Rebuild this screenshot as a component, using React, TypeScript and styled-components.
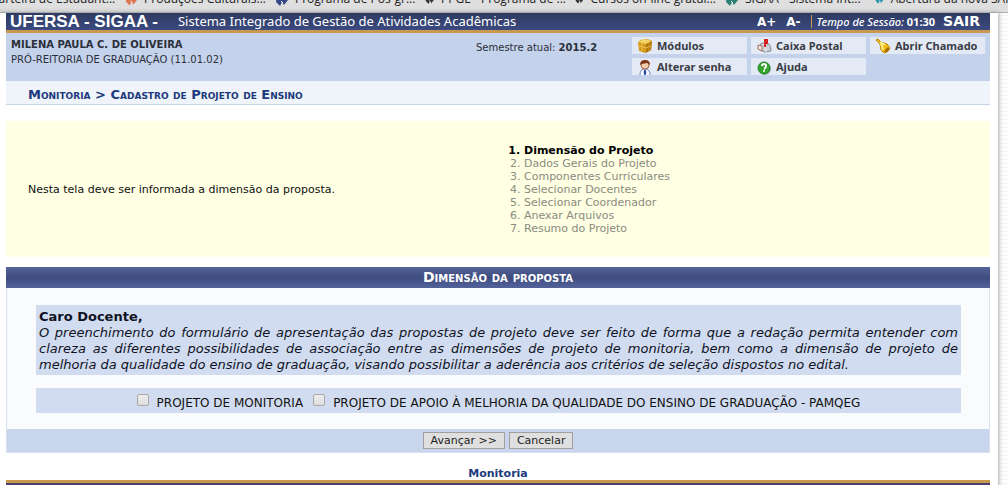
import React from "react";
import styled, { createGlobalStyle } from "styled-components";

const GlobalStyle = createGlobalStyle`
  * { box-sizing: border-box; }
  html { overflow: hidden; }
  body {
    margin: 0;
    color: #111;
    font: 11px/13px "DejaVu Sans", Verdana, sans-serif;
    background: repeating-linear-gradient(#fdfdfd 0 3px, #f3f3f3 3px 4px);
  }
  button, input { font: inherit; }
`;

const BookmarkBar = styled.nav`
  display: flex;
  align-items: flex-end;
  height: 13px;
  padding-bottom: 5px;
  overflow: hidden;
  background: #dfdfdf;
  border-bottom: 1px solid #a9adb5;
`;

const Bookmark = styled.a<{ $first?: boolean }>`
  flex: none;
  display: flex;
  align-items: center;
  gap: 7px;
  width: ${(p) => (p.$first ? "125px" : "150px")};
  margin-left: ${(p) => (p.$first ? "-9px" : "0")};
  padding-left: ${(p) => (p.$first ? "0" : "9px")};
  color: #222;
  font: 12px/16px "Open Sans", sans-serif;
  white-space: nowrap;
  text-decoration: none;
`;

const Page = styled.div`
  margin-right: 10px;
  padding: 0 8px 0 6px;
  background: #fff;
  box-shadow: 0 0 4px 1px #aaa;
`;

const TopBar = styled.header`
  display: flex;
  align-items: center;
  height: 20px;
  padding: 0 10px 0 4px;
  color: #fff;
  background: linear-gradient(#2e3a61, #3b4a80);
  border-bottom: 3px solid #c8984f;
  white-space: nowrap;
`;

const Brand = styled.h1`
  margin: 0 20px 0 0;
  font: bold 17px/17px "Liberation Sans", Arial, sans-serif;
`;

const SystemName = styled.span`
  flex: 1;
  font: 13px/17px "Noto Sans", Tahoma, sans-serif;
`;

const SizeButton = styled.button`
  margin-right: 10px;
  padding: 0;
  border: 0;
  color: #fff;
  background: none;
  font-size: 12px;
  line-height: 16px;
  font-weight: bold;
`;

const Session = styled.span`
  padding: 0 8px 0 5px;
  border-left: 1px solid #c8984f;
  font: bold 11px/13px "Noto Sans", Tahoma, sans-serif;
  em { font-weight: 500; }
`;

const Exit = styled.a`
  color: #fff;
  font-size: 14px;
  font-weight: bold;
  text-decoration: none;
`;

const UserPanel = styled.section`
  display: flex;
  height: 48px;
  padding: 4px 5px;
  color: #2b2f3a;
  background: #c4d2eb;
`;

const UserInfo = styled.div`
  flex: 1;
  font-size: 10px;
  line-height: 15px;
`;

const Semester = styled.div`
  width: 156px;
  padding-top: 4px;
  font-size: 10px;
`;

const Tools = styled.div`
  display: grid;
  grid-template-columns: repeat(3, 115px);
  grid-auto-rows: 17px;
  gap: 4px;
`;

const Tool = styled.a`
  display: flex;
  align-items: center;
  gap: 4px;
  padding-left: 5px;
  color: #3a3d45;
  background: #e3eaf6;
  font: bold 11px/16px "Noto Sans", Tahoma, sans-serif;
  text-decoration: none;
  white-space: nowrap;
`;

const Path = styled.h2`
  margin: 0 0 16px;
  padding: 6px 22px 2px;
  color: #1c3a7c;
  background: #eff3fa;
  border-bottom: 1px solid #c4d2eb;
  font-size: 13px;
  line-height: 15px;
  font-variant: small-caps;
`;

const Notice = styled.section`
  display: flex;
  align-items: center;
  height: 136px;
  margin-bottom: 10px;
  padding: 0 22px;
  background: #feffe3;
  p { flex: 1; margin: 0; }
  ol {
    flex: 1;
    margin: 0;
    padding-left: 52px;
    color: #8b8b80;
  }
`;

const Step = styled.li<{ $current?: boolean }>`
  ${(p) => p.$current && "color: #000; font-weight: bold;"}
`;

const FormPanel = styled.form`
  background: #f9fbfd;
  border: 1px solid #d9e0ee;
  border-top: 0;
`;

const FormTitle = styled.h3`
  margin: 0 -1px;
  color: #fff;
  background: linear-gradient(#56649a, #3e4c7f 50%, #53639a);
  font-size: 14px;
  line-height: 21px;
  font-variant: small-caps;
  text-align: center;
`;

const FormBody = styled.div`
  padding: 17px 28px 16px 29px;
`;

const Message = styled.div`
  margin-bottom: 13px;
  padding: 4px 3px 2px;
  color: #10131f;
  background: #d1dcf0;
  font-size: 13px;
  line-height: 16px;
  text-align: justify;
  p { margin: 0; font-style: italic; }
`;

const Options = styled.div`
  display: flex;
  justify-content: center;
  align-items: center;
  gap: 10px;
  height: 25px;
  padding-top: 6px;
  background: #d1dcf0;
  font-size: 12px;
`;

const Option = styled.label`
  display: flex;
  align-items: center;
  gap: 8px;
`;

const CheckBox = styled.input`
  appearance: none;
  width: 12px;
  height: 12px;
  margin: 0 0 7px;
  border: 1px solid #a9a9a9;
  border-radius: 2px;
  background: linear-gradient(#ededed, #dedede);
`;

const Actions = styled.div`
  display: flex;
  justify-content: center;
  gap: 4px;
  height: 23px;
  padding: 3px 0;
  background: #c8d5ec;
`;

const ActionButton = styled.button`
  height: 17px;
  padding: 0 7px;
  border: 1px solid #a0a0a0;
  color: #222;
  background: #dfdfdf;
  line-height: 15px;
`;

const Footer = styled.footer`
  margin-top: 14px;
  text-align: center;
  border-bottom: 3px solid #c8984f;
  a { color: #1c3a7c; font-weight: bold; text-decoration: none; }
`;

const BottomBar = styled.div`
  height: 20px;
  background: #4a4070;
`;

const Favicon = ({ color }: { color: string }) => (
  <svg width="13" height="14" viewBox="0 0 13 14">
    <path d="M2 1h9l2 7-4 5-2-3-2 4-4-4z" fill={color} />
    <path d="M6 9l2 2" stroke="#fff" />
  </svg>
);

const ModulesIcon = () => (
  <svg width="16" height="16" viewBox="0 0 16 16">
    <path d="M1 4q0-1 6-3 6 0 8 2l-1 9-6 3-6-2z" fill="#d39a1c" />
    <path d="M1 4l6-3 8 2-6 3z" fill="#f5d468" />
    <path d="M9 6l6-3-1 9-5 3z" fill="#b2780f" />
    <path d="M2 8l7 2 5-2M5 5v8" stroke="#eec14a" fill="none" />
    <path d="M12 5v8" stroke="#cf9526" />
  </svg>
);

const MailIcon = () => (
  <svg width="16" height="16" viewBox="0 0 16 16">
    <path d="M4 8q0-3 3-3l6 1q2 1 2 7l-6 1-5-2z" fill="#c9ced6" stroke="#868c96" />
    <path d="M7 6q3 0 3 8" fill="none" stroke="#f4f5f7" />
    <path d="M2 7l4 1v5l-4-2z" fill="#f3e9e2" stroke="#a4705c" />
    <path d="M9 9V2h2v3H9" fill="#dd2727" stroke="#d32020" strokeWidth="2" />
  </svg>
);

const BellIcon = () => (
  <svg width="16" height="16" viewBox="0 0 16 16">
    <path d="M1 2l2-1 3 3 6 2 3 4q-1 4-6 5l-3-3-1-6z" fill="#efb913" stroke="#c08a0c" />
    <path d="M6 5l2 7M5 4l5 3" stroke="#fff08c" strokeWidth="2" />
    <ellipse cx="12" cy="12" rx="1.5" ry="3" transform="rotate(45 12 12)" fill="#a56a04" />
  </svg>
);

const UserIcon = () => (
  <svg width="16" height="16" viewBox="0 0 16 16">
    <path d="M3 16q0-6 5-6t5 6" fill="#fff" stroke="#6685c5" />
    <circle cx="8" cy="6" r="4" fill="#f4cfad" stroke="#a8653d" />
    <path d="M3 6q0-5 5-5t5 5l-3-2-5 1z" fill="#7c3516" />
    <path d="M8 11l1 2-1 3-1-3z" fill="#2445a5" stroke="#2445a5" />
  </svg>
);

const HelpIcon = () => (
  <svg width="16" height="16" viewBox="0 0 16 16">
    <circle cx="9" cy="10" r="6" fill="#a5b0b8" />
    <circle cx="8" cy="9" r="6" fill="#35a52e" stroke="#228420" />
    <path d="M6 7q0-2 2-2t2 2-2 3" fill="none" stroke="#fff" strokeWidth="2" />
    <circle cx="8" cy="12" r="1" fill="#fff" />
  </svg>
);

const bookmarks = [
  ["Produções Culturais...", "#dd7650"],
  ["Programa de Pós-gr...", "#334a86"],
  ["PPGE - Programa de ...", "#333333"],
  ["Cursos on-line gratui...", "#333333"],
  ["SIGAA - Sistema Int...", "#2b8076"],
  ["Abertura da nova SAM", "#2a94ab"],
];

const steps = [
  "Dimensão do Projeto",
  "Dados Gerais do Projeto",
  "Componentes Curriculares",
  "Selecionar Docentes",
  "Selecionar Coordenador",
  "Anexar Arquivos",
  "Resumo do Projeto",
];

export default function App() {
  return (
    <>
      <GlobalStyle />
      <BookmarkBar>
        <Bookmark href="#" $first>Carteira de Estudant...</Bookmark>
        {bookmarks.map(([name, color]) => (
          <Bookmark href="#" key={name}>
            <Favicon color={color} />
            {name}
          </Bookmark>
        ))}
      </BookmarkBar>
      <Page>
        <TopBar>
          <Brand>UFERSA - SIGAA -</Brand>
          <SystemName>Sistema Integrado de Gestão de Atividades Acadêmicas</SystemName>
          <SizeButton>A+</SizeButton>
          <SizeButton>A-</SizeButton>
          <Session><em>Tempo de Sessão:</em> 01:30</Session>
          <Exit href="#">SAIR</Exit>
        </TopBar>
        <UserPanel>
          <UserInfo>
            <strong>MILENA PAULA C. DE OLIVEIRA</strong>
            <div>PRÓ-REITORIA DE GRADUAÇÃO (11.01.02)</div>
          </UserInfo>
          <Semester>Semestre atual: <strong>2015.2</strong></Semester>
          <Tools>
            <Tool href="#"><ModulesIcon />Módulos</Tool>
            <Tool href="#"><MailIcon />Caixa Postal</Tool>
            <Tool href="#"><BellIcon />Abrir Chamado</Tool>
            <Tool href="#"><UserIcon />Alterar senha</Tool>
            <Tool href="#"><HelpIcon />Ajuda</Tool>
          </Tools>
        </UserPanel>
        <Path>Monitoria &gt; Cadastro de Projeto de Ensino</Path>
        <Notice>
          <p>Nesta tela deve ser informada a dimensão da proposta.</p>
          <ol>
            {steps.map((step, i) => (
              <Step key={step} $current={i === 0}>{step}</Step>
            ))}
          </ol>
        </Notice>
        <FormPanel onSubmit={(e) => e.preventDefault()}>
          <FormTitle>Dimensão da proposta</FormTitle>
          <FormBody>
            <Message>
              <strong>Caro Docente,</strong>
              <p>
                O preenchimento do formulário de apresentação das propostas de projeto deve ser feito de
                forma que a redação permita entender com clareza as diferentes possibilidades de
                associação entre as dimensões de projeto de monitoria, bem como a dimensão de projeto de
                melhoria da qualidade do ensino de graduação, visando possibilitar a aderência aos
                critérios de seleção dispostos no edital.
              </p>
            </Message>
            <Options>
              <Option><CheckBox type="checkbox" />PROJETO DE MONITORIA</Option>
              <Option>
                <CheckBox type="checkbox" />
                PROJETO DE APOIO À MELHORIA DA QUALIDADE DO ENSINO DE GRADUAÇÃO - PAMQEG
              </Option>
            </Options>
          </FormBody>
          <Actions>
            <ActionButton>Avançar &gt;&gt;</ActionButton>
            <ActionButton type="button">Cancelar</ActionButton>
          </Actions>
        </FormPanel>
        <Footer><a href="#">Monitoria</a></Footer>
        <BottomBar />
      </Page>
    </>
  );
}
